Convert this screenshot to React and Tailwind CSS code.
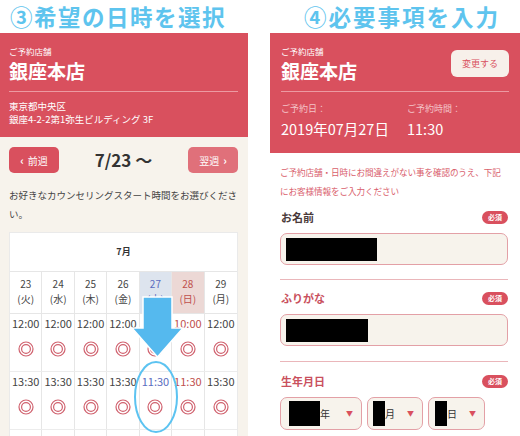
import React from "react";

const F = { fontFamily: '"Noto Sans CJK JP", "Noto Sans", sans-serif' };

function Dbl() {
  return (
    <svg width="16" height="16" viewBox="0 0 16 16">
      <circle cx="8" cy="8" r="7" fill="none" stroke="#d0616e" strokeWidth="1.2" />
      <circle cx="8" cy="8" r="4.4" fill="none" stroke="#d0616e" strokeWidth="1.2" />
    </svg>
  );
}

const days = [
  { d: "23", w: "(火)" },
  { d: "24", w: "(水)" },
  { d: "25", w: "(木)" },
  { d: "26", w: "(金)" },
  { d: "27", w: "(土)" },
  { d: "28", w: "(日)" },
  { d: "29", w: "(月)" },
];

const rows = [
  ["12:00", "12:00", "12:00", "12:00", "10:00", "10:00", "12:00"],
  ["13:30", "13:30", "13:30", "13:30", "11:30", "11:30", "13:30"],
  ["15:00", "15:00", "15:00", "15:00", "13:00", "13:00", "15:00"],
];

function colColor(i) {
  if (i === 4) return "text-[#5a6cc0]";
  if (i === 5) return "text-[#c0504d]";
  return "text-[#444]";
}

function Badge() {
  return (
    <span className="rounded-full bg-[#d9505e] text-white text-[7px] leading-none px-[6px] py-[3px] font-bold">必須</span>
  );
}

export default function App() {
  return (
    <div style={F} className="w-[520px] h-[436px] overflow-hidden bg-white flex">
      {/* Left */}
      <div className="w-[248px] h-[436px] overflow-hidden flex flex-col relative shrink-0">
        <div className="h-[33px] shrink-0 pl-[10px] flex items-center text-[22.5px] font-bold text-[#5ec4ee] tracking-[1.5px]">③希望の日時を選択</div>
        <div className="h-[104px] shrink-0 bg-[#d9505e] px-[9px] pt-[12px] text-white">
          <div className="text-[8.5px] leading-[12px]">ご予約店舗</div>
          <div className="text-[19px] font-bold leading-[26px] mt-[1px]">銀座本店</div>
          <div className="h-px bg-[#ec9aa2] mt-[7px] mr-[1px]"></div>
          <div className="text-[9.5px] leading-[13px] mt-[8px]">東京都中央区</div>
          <div className="text-[9.5px] leading-[13px]">銀座4-2-2第1弥生ビルディング 3F</div>
        </div>
        <div className="flex-1 shrink-0 bg-[#f7f3ec] px-[9px] pt-[10px]">
          <div className="flex items-center justify-between h-[26px] pr-[1px]">
            <div className="w-[50px] h-[26px] rounded-[5px] bg-[#d9505e] text-white text-[10px] flex items-center justify-center gap-[4px]">
              <span className="font-bold text-[11px]">‹</span>前週
            </div>
            <div className="text-[17px] font-bold text-[#333]">7/23 ～</div>
            <div className="w-[50px] h-[26px] rounded-[5px] bg-[#e0707a] text-white text-[10px] flex items-center justify-center gap-[4px]">
              翌週<span className="font-bold text-[11px]">›</span>
            </div>
          </div>
          <div className="text-[9.5px] leading-[19px] text-[#444] mt-[13px]">お好きなカウンセリングスタート時間をお選びくださ<br />い。</div>
          <div className="mt-[8px] bg-white border border-[#eaeaea] w-[229px]">
            <div className="h-[39px] flex items-center justify-center text-[9px] font-bold text-[#333] border-b border-[#e6e6e6]">7月</div>
            <div className="grid grid-cols-7 h-[42px] border-b border-[#e6e6e6]">
              {days.map((d, i) => (
                <div
                  key={i}
                  className={
                    "flex flex-col items-center pt-[4px] text-[10px] leading-[15px] " +
                    (i < 6 ? "border-r border-[#e6e6e6] " : "") +
                    (i === 4 ? "bg-[#dde4ee] " : i === 5 ? "bg-[#ecd8d5] " : "") +
                    colColor(i)
                  }
                >
                  <span>{d.d}</span>
                  <span>{d.w}</span>
                </div>
              ))}
            </div>
            {rows.map((r, ri) => (
              <div key={ri} className="grid grid-cols-7 h-[58px] border-b border-[#ececec]">
                {r.map((t, i) => (
                  <div
                    key={i}
                    className={
                      "flex flex-col items-center pt-[1px] " +
                      (i < 6 ? "border-r border-[#e6e6e6] " : "")
                    }
                  >
                    <span className={"text-[11px] leading-[16px] " + colColor(i)}>{t}</span>
                    <div className="mt-[10px]"><Dbl /></div>
                  </div>
                ))}
              </div>
            ))}
          </div>
        </div>
        {/* overlay arrow + ellipse */}
        <svg className="absolute left-0 top-0" width="248" height="436" viewBox="0 0 248 436">
          <path
            d="M143 297 L172 297 L172 328 L183 328 L157.5 357 L132 328 L143 328 Z"
            fill="#55b9ee"
            stroke="#ffffff"
            strokeWidth="1.5"
          />
          <ellipse cx="156" cy="397" rx="21" ry="35" fill="none" stroke="#5cc3f1" strokeWidth="2" />
        </svg>
      </div>

      <div className="w-[22px] shrink-0"></div>

      {/* Right */}
      <div className="w-[250px] h-[436px] overflow-hidden flex flex-col shrink-0">
        <div className="h-[33px] shrink-0 pl-[34px] flex items-center text-[22.5px] font-bold text-[#5ec4ee] tracking-[2px]">④必要事項を入力</div>
        <div className="h-[120px] shrink-0 bg-[#d9505e] px-[11px] pt-[12px] text-white">
          <div className="flex justify-between">
            <div>
              <div className="text-[8.5px] leading-[12px]">ご予約店舗</div>
              <div className="text-[19px] font-bold leading-[26px] mt-[1px]">銀座本店</div>
            </div>
            <div className="mt-[5px] w-[58px] h-[27px] rounded-[6px] bg-[#f7f0ea] text-[#d9505e] text-[9px] flex items-center justify-center">変更する</div>
          </div>
          <div className="h-px bg-[#ec9aa2] mt-[7px]"></div>
          <div className="flex mt-[10px]">
            <div className="w-[126px]">
              <div className="text-[9px] leading-[13px] text-[#f4c4c8]">ご予約日：</div>
              <div className="text-[14.5px] leading-[20px] mt-[4px]">2019年07月27日</div>
            </div>
            <div>
              <div className="text-[9px] leading-[13px] text-[#f4c4c8]">ご予約時間：</div>
              <div className="text-[14.5px] leading-[20px] mt-[4px]">11:30</div>
            </div>
          </div>
        </div>
        <div className="flex-1 shrink-0 px-[10px] pt-[10px]">
          <div className="text-[8.6px] leading-[19px] text-[#d9606c] whitespace-nowrap tracking-[-0.1px]">ご予約店舗・日時にお間違えがない事を確認のうえ、下記<br />にお客様情報をご入力ください</div>
          <div className="flex items-center justify-between mt-[8px] h-[16px] pl-[1px] pr-[2px]">
            <span className="text-[11px] font-bold text-[#4a3a3a]">お名前</span>
            <Badge />
          </div>
          <div className="mt-[8px] h-[32px] rounded-[7px] border border-[#e3a0a6] bg-[#f7f3ec] flex items-center px-[5px] mr-[2px]">
            <div className="w-[91px] h-[23px] bg-black"></div>
          </div>
          <div className="h-px bg-[#eab6ba] mt-[14px] mr-[2px]"></div>
          <div className="flex items-center justify-between mt-[10px] h-[16px] pl-[1px] pr-[2px]">
            <span className="text-[11px] font-bold text-[#c9505d]">ふりがな</span>
            <Badge />
          </div>
          <div className="mt-[8px] h-[32px] rounded-[7px] border border-[#e3a0a6] bg-[#f7f3ec] flex items-center px-[5px] mr-[2px]">
            <div className="w-[82px] h-[23px] bg-black"></div>
          </div>
          <div className="h-px bg-[#eab6ba] mt-[15px] mr-[2px]"></div>
          <div className="flex items-center justify-between mt-[11px] h-[16px] pl-[1px] pr-[2px]">
            <span className="text-[11px] font-bold text-[#c9505d]">生年月日</span>
            <Badge />
          </div>
          <div className="flex gap-[5px] mt-[8px]">
            <div className="w-[82px] h-[33px] rounded-[7px] border border-[#e3a0a6] bg-[#f7f3ec] flex items-center pl-[8px] pr-[8px]">
              <div className="w-[31px] h-[25px] bg-black"></div>
              <span className="text-[10px] text-[#333]">年</span>
              <span className="ml-auto text-[7px] text-[#d9505e]">▼</span>
            </div>
            <div className="w-[56px] h-[33px] rounded-[7px] border border-[#e3a0a6] bg-[#f7f3ec] flex items-center pl-[5px] pr-[8px]">
              <div className="w-[12px] h-[25px] bg-black"></div>
              <span className="text-[10px] text-[#333]">月</span>
              <span className="ml-auto text-[7px] text-[#d9505e]">▼</span>
            </div>
            <div className="w-[57px] h-[33px] rounded-[7px] border border-[#e3a0a6] bg-[#f7f3ec] flex items-center pl-[6px] pr-[8px]">
              <div className="w-[12px] h-[25px] bg-black"></div>
              <span className="text-[10px] text-[#333]">日</span>
              <span className="ml-auto text-[7px] text-[#d9505e]">▼</span>
            </div>
          </div>
        </div>
      </div>
    </div>
  );
}
